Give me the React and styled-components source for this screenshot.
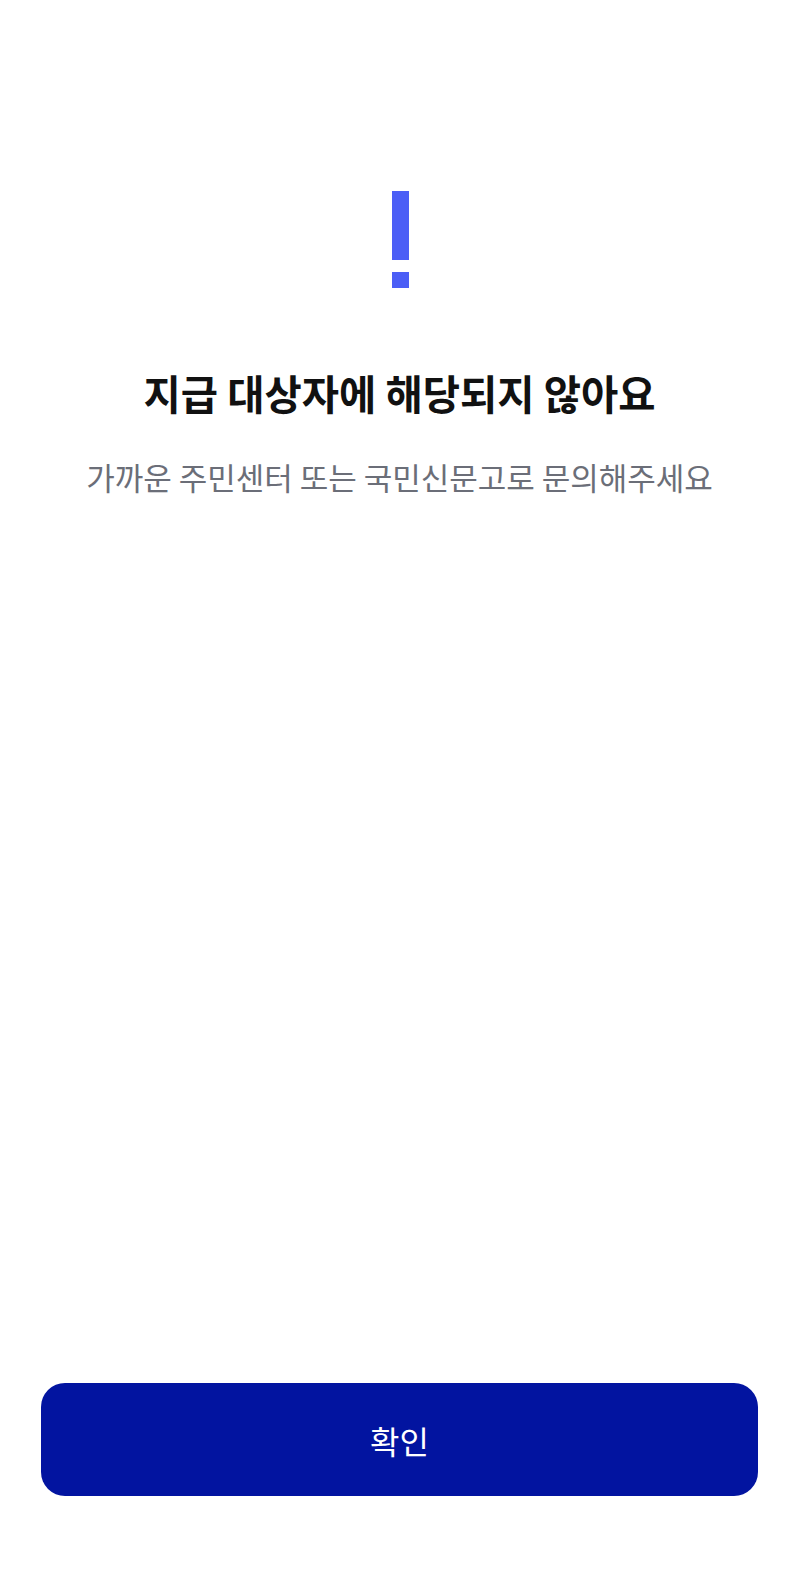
import React from "react";
import styled, { createGlobalStyle } from "styled-components";

const Global = createGlobalStyle`
  html, body { margin: 0; padding: 0; background: #ffffff; }
  body { font-family: "Noto Sans CJK KR", "Noto Sans", sans-serif; }
  #root { min-height: 100vh; }
`;

const Page = styled.div`
  min-height: 100vh;
  box-sizing: border-box;
  display: flex;
  flex-direction: column;
  align-items: stretch;
  padding: 191px 42px 88px 41px;
`;

const Content = styled.main`
  flex: 1;
  display: flex;
  flex-direction: column;
  align-items: center;
`;

const Mark = styled.div`
  display: flex;
  flex-direction: column;
  align-items: center;
  gap: 12px;
  margin-left: 1px;
`;

const Bar = styled.div`
  width: 17px;
  height: ${(p) => p.$h}px;
  background: #4b5ef6;
`;

const Title = styled.h1`
  margin: 80px 0 0;
  font-size: 40.5px;
  font-weight: 700;
  line-height: 50px;
  color: #111111;
  letter-spacing: 0;
  text-align: center;
`;

const Subtitle = styled.p`
  margin: 39px 0 0;
  font-size: 31px;
  font-weight: 400;
  line-height: 40px;
  color: #6b6e78;
  letter-spacing: 0;
  text-align: center;
`;

const Button = styled.button`
  height: 113px;
  margin-bottom: -8px;
  border: none;
  border-radius: 24px;
  background: #0214a0;
  color: #ffffff;
  font-family: inherit;
  font-size: 32px;
  font-weight: 400;
  cursor: pointer;
`;

export default function App() {
  return (
    <>
      <Global />
      <Page>
        <Content>
          <Mark aria-hidden="true">
            <Bar $h={69} />
            <Bar $h={16} />
          </Mark>
          <Title>지급 대상자에 해당되지 않아요</Title>
          <Subtitle>가까운 주민센터 또는 국민신문고로 문의해주세요</Subtitle>
        </Content>
        <Button>확인</Button>
      </Page>
    </>
  );
}
